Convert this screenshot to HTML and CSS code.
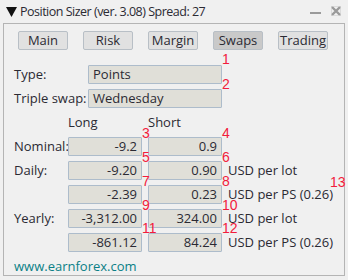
FILE: index.html
```html
<!DOCTYPE html>
<html lang="en">
<head>
    <meta charset="UTF-8">
    <title>Position Sizer</title>
    <link rel="stylesheet" href="styles.css">
</head>
<body>

<div class="window">
    <div class="titlebar">
        <svg class="arrow" width="11" height="10" viewBox="0 0 11 10"><polygon points="0,0 11,0 5.5,10" fill="#111"/></svg>
        <span class="title">Position Sizer (ver. 3.08) Spread: 27</span>
        <svg class="ctrl" width="12" height="10" viewBox="0 0 12 10"><rect x="0" y="6" width="11" height="2" fill="#9a9a9a"/></svg>
        <svg class="ctrl" width="10" height="10" viewBox="0 0 10 10"><path d="M1 1 L9 9 M9 1 L1 9" stroke="#9a9a9a" stroke-width="2.4"/><rect x="0" y="0" width="10" height="10" fill="none" stroke="#bdbdbd" stroke-width="0.8"/></svg>
    </div>

    <div class="panel">
        <div class="tabs">
            <button class="tab">Main</button>
            <button class="tab">Risk</button>
            <button class="tab">Margin</button>
            <button class="tab active">Swaps</button>
            <button class="tab">Trading</button>
        </div>

        <div class="info">
            <span class="label">Type:</span>
            <div class="field left">Points</div>
            <span class="label">Triple swap:</span>
            <div class="field left">Wednesday</div>
        </div>

        <div class="grid">
            <span></span>
            <span class="head">Long</span>
            <span class="head">Short</span>
            <span></span>

            <span class="label">Nominal:</span>
            <div class="field">-9.2</div>
            <div class="field">0.9</div>
            <span></span>

            <span class="label">Daily:</span>
            <div class="field">-9.20</div>
            <div class="field">0.90</div>
            <span class="unit">USD per lot</span>

            <span></span>
            <div class="field">-2.39</div>
            <div class="field">0.23</div>
            <span class="unit">USD per PS (0.26)</span>

            <span class="label">Yearly:</span>
            <div class="field">-3,312.00</div>
            <div class="field">324.00</div>
            <span class="unit">USD per lot</span>

            <span></span>
            <div class="field">-861.12</div>
            <div class="field">84.24</div>
            <span class="unit">USD per PS (0.26)</span>
        </div>

        <div class="site">www.earnforex.com</div>

        <span class="mark" style="left: 218px; top: 28px;">1</span>
        <span class="mark" style="left: 218px; top: 53px;">2</span>
        <span class="mark" style="left: 138px; top: 102px;">3</span>
        <span class="mark" style="left: 218px; top: 102px;">4</span>
        <span class="mark" style="left: 138px; top: 126px;">5</span>
        <span class="mark" style="left: 218px; top: 126px;">6</span>
        <span class="mark" style="left: 138px; top: 150px;">7</span>
        <span class="mark" style="left: 218px; top: 150px;">8</span>
        <span class="mark" style="left: 138px; top: 174px;">9</span>
        <span class="mark" style="left: 218px; top: 174px;">10</span>
        <span class="mark" style="left: 138px; top: 197px;">11</span>
        <span class="mark" style="left: 218px; top: 197px;">12</span>
        <span class="mark" style="left: 326px; top: 151px;">13</span>
    </div>
</div>

</body>
</html>
```

FILE: styles.css
```css
body {
    margin: 0;
    padding: 0;
    background-color: #f0f0f0;
    font-family: 'Open Sans', sans-serif;
    font-size: 13px;
    color: #2b2a33;
}

.window {
    width: 348px;
    height: 280px;
    background-color: #f0f0f0;
    box-sizing: border-box;
}

.titlebar {
    height: 22px;
    display: flex;
    align-items: center;
    padding-left: 6px;
    padding-right: 7px;
    box-sizing: border-box;
}

.arrow {
    margin-right: 3px;
    margin-top: 2px;
}

.title {
    flex: 1;
    font-size: 12.5px;
    letter-spacing: -0.5px;
    padding-top: 1px;
}

.ctrl {
    margin-left: 9px;
}

.panel {
    position: relative;
    margin: 1px 3px 0 3px;
    height: 253px;
    border: 1px solid #b4b4b4;
    box-sizing: border-box;
    padding: 7px 0 0 10px;
}

.tabs {
    display: flex;
    gap: 15px;
    padding-left: 4px;
}

.tab {
    width: 50px;
    height: 19px;
    padding: 0;
    font-family: inherit;
    font-size: 13px;
    color: #2b2a33;
    background-color: #e1e1e1;
    border: 1px solid #b8bfc6;
    border-radius: 2px;
    line-height: 17px;
}

.tab.active {
    background-color: #c9c9c9;
}

.info {
    display: grid;
    grid-template-columns: 74px 134px;
    row-gap: 5px;
    margin-top: 15px;
}

.grid {
    display: grid;
    grid-template-columns: 48px 74px 74px auto;
    column-gap: 6px;
    row-gap: 5px;
    margin-top: 5px;
}

.label,
.head,
.unit {
    height: 19px;
    line-height: 19px;
    white-space: nowrap;
}

.field {
    height: 19px;
    box-sizing: border-box;
    border: 1px solid #adbccb;
    background-color: #e0dfd8;
    line-height: 17px;
    text-align: right;
    padding-right: 4px;
    border-radius: 1px;
}

.field.left {
    text-align: left;
    padding-left: 4px;
}

.site {
    margin-top: 5px;
    color: #0a7f86;
    line-height: 18px;
}

.mark {
    position: absolute;
    font-family: 'Liberation Sans', sans-serif;
    font-size: 14px;
    line-height: 14px;
    color: #f21c3c;
}
```
